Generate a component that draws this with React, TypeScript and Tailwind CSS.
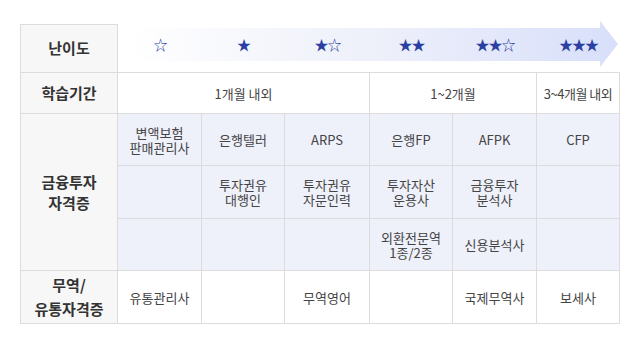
const font = "font-['Noto_Sans_CJK_KR','Noto_Sans',sans-serif]";
const th =
  "border border-[#dcdcdc] bg-[#f7f7f7] text-[15px] font-bold text-[#333] text-center align-middle p-0";
const cell =
  "border border-[#dcdcdc] text-[13px] leading-[15px] text-[#444] text-center align-middle p-0";
const fin = `${cell} bg-[#eef0fa]`;

const levels = ["☆", "★", "★☆", "★★", "★★☆", "★★★"];

function Arrow() {
  return (
    <svg
      className="absolute left-[10px] top-[-4px]"
      width="490"
      height="46"
      viewBox="0 0 490 46"
    >
      <defs>
        <linearGradient id="arrowGrad" x1="0" y1="0" x2="1" y2="0">
          <stop offset="0" stopColor="#ffffff" />
          <stop offset="0.5" stopColor="#eef0fa" />
          <stop offset="1" stopColor="#d8dffa" />
        </linearGradient>
      </defs>
      <path d="M0 7 H472 V0 L490 23 L472 46 V40 H0 Z" fill="url(#arrowGrad)" />
    </svg>
  );
}

export default function App() {
  return (
    <div className={`min-h-[354px] bg-white pl-[20px] pt-[24px] ${font}`}>
      <table className="table-fixed border-collapse w-[600px]">
        <colgroup>
          <col className="w-[97px]" />
          <col className="w-[84px]" />
          <col className="w-[83px]" />
          <col className="w-[85px]" />
          <col className="w-[83px]" />
          <col className="w-[84px]" />
          <col className="w-[83px]" />
        </colgroup>
        <tbody>
          <tr>
            <th className={`${th} h-[48px]`}>난이도</th>
            <td colSpan={6} className="p-0 border-b border-[#dcdcdc] h-[48px]">
              <div className="relative h-[47px]">
                <Arrow />
                <div className="relative grid grid-cols-[84px_83px_85px_83px_84px_83px] h-full items-center pb-[7px] text-[14px] text-[#2b3fa3]">
                  {levels.map((s) => (
                    <span key={s} className="text-center tracking-[-1px]">
                      {s}
                    </span>
                  ))}
                </div>
              </div>
            </td>
          </tr>
          <tr>
            <th className={`${th} h-[41px]`}>학습기간</th>
            <td colSpan={3} className={cell}>1개월 내외</td>
            <td colSpan={2} className={cell}>1~2개월</td>
            <td className={`${cell} tracking-[-0.5px]`}>3~4개월 내외</td>
          </tr>
          <tr>
            <th rowSpan={3} className={`${th} leading-[21px]`}>
              금융투자
              <br />
              자격증
            </th>
            <td className={`${fin} h-[52px]`}>
              변액보험
              <br />
              판매관리사
            </td>
            <td className={fin}>은행텔러</td>
            <td className={fin}>ARPS</td>
            <td className={fin}>은행FP</td>
            <td className={fin}>AFPK</td>
            <td className={fin}>CFP</td>
          </tr>
          <tr>
            <td className={`${fin} h-[53px]`}></td>
            <td className={fin}>
              투자권유
              <br />
              대행인
            </td>
            <td className={fin}>
              투자권유
              <br />
              자문인력
            </td>
            <td className={fin}>
              투자자산
              <br />
              운용사
            </td>
            <td className={fin}>
              금융투자
              <br />
              분석사
            </td>
            <td className={fin}></td>
          </tr>
          <tr>
            <td className={`${fin} h-[52px]`}></td>
            <td className={fin}></td>
            <td className={fin}></td>
            <td className={fin}>
              외환전문역
              <br />
              1종/2종
            </td>
            <td className={fin}>신용분석사</td>
            <td className={fin}></td>
          </tr>
          <tr>
            <th className={`${th} h-[53px] leading-[24px]`}>
              무역/
              <br />
              유통자격증
            </th>
            <td className={cell}>유통관리사</td>
            <td className={cell}></td>
            <td className={cell}>무역영어</td>
            <td className={cell}></td>
            <td className={cell}>국제무역사</td>
            <td className={cell}>보세사</td>
          </tr>
        </tbody>
      </table>
    </div>
  );
}
